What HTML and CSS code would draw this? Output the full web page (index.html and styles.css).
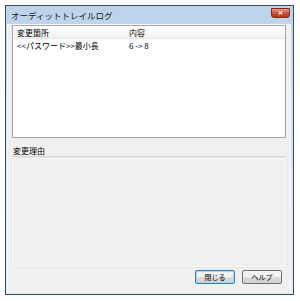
FILE: index.html
```html
<!DOCTYPE html>
<html lang="ja">
<head>
  <meta charset="UTF-8">
  <title>オーディットトレイルログ</title>
  <link rel="stylesheet" href="styles.css">
</head>
<body>
  <div class="window">
    <div class="titlebar">
      <span class="title">オーディットトレイルログ</span>
      <span class="close">&#x2715;</span>
    </div>
    <div class="client">
      <div class="list">
        <div class="list-head">
          <span class="col-a">変更箇所</span>
          <span class="col-b">内容</span>
        </div>
        <div class="list-row">
          <span class="col-a">&lt;&lt;パスワード&gt;&gt;最小長</span>
          <span class="col-b">6 -&gt; 8</span>
        </div>
      </div>
      <div class="reason-label">変更理由</div>
      <div class="reason-box"></div>
      <div class="buttons">
        <button class="btn btn-default">閉じる</button>
        <button class="btn">ヘルプ</button>
      </div>
    </div>
  </div>
</body>
</html>
```

FILE: styles.css
```css
* {
  margin: 0;
  padding: 0;
  box-sizing: border-box;
}

body {
  background: #fff;
  font-family: "Noto Sans CJK JP", "Liberation Sans", sans-serif;
  font-size: 8px;
  color: #000;
}

.window {
  margin: 5px 0 0 5px;
  width: 289px;
  height: 290px;
  border: 1px solid #3d4d5c;
  border-bottom-color: #1d5a5a;
  background: linear-gradient(#bcd3ea, #d9e6f3 60%, #e4edf6);
  display: flex;
  flex-direction: column;
  padding: 0 2px 2px 1px;
}

.titlebar {
  height: 18px;
  display: flex;
  align-items: center;
  justify-content: space-between;
  padding: 0 1px 0 4px;
}

.title {
  font-size: 8.5px;
  color: #1a1a1a;
}

.close {
  width: 19px;
  height: 10px;
  margin-top: -5px;
  border-radius: 0 0 3px 3px;
  border: 1px solid #7a2a1e;
  background: linear-gradient(#eba08c, #d0553c 50%, #b8321e);
  color: #fff;
  font-size: 6px;
  font-weight: bold;
  line-height: 8px;
  text-align: center;
}

.client {
  flex: 1;
  background: #f0f0f0;
  border: 1px solid #f6f8fa;
  display: flex;
  flex-direction: column;
  padding: 0 4px 7px 4px;
}

.list {
  height: 113px;
  background: #fff;
  border: 1px solid #a5a5a5;
}

.list-head {
  height: 13px;
  display: flex;
  align-items: center;
  background: linear-gradient(#fff, #f1f2f4);
  border-bottom: 1px solid #e5e5e5;
}

.list-row {
  height: 12px;
  display: flex;
  align-items: center;
}

.col-a {
  width: 116px;
  padding-left: 4px;
}

.col-b {
  flex: 1;
}

.reason-label {
  margin-top: 6px;
  height: 13px;
  line-height: 13px;
  padding-left: 1px;
  border-bottom: 1px solid #d8d8d8;
}

.reason-box {
  height: 109px;
  margin-top: 1px;
  background: #f0f0f0;
  border: 1px solid #fafafa;
  border-radius: 2px;
  box-shadow: 0 0 0 1px #e6e6e6;
}

.buttons {
  margin-top: auto;
  display: flex;
  justify-content: flex-end;
  gap: 7px;
  padding-right: 4px;
}

.btn {
  width: 40px;
  height: 14px;
  font-family: inherit;
  font-size: 7px;
  color: #000;
  background: linear-gradient(#f2f2f2 50%, #dddddd 50%, #cfcfcf);
  border: 1px solid #707070;
  border-radius: 2px;
}

.btn-default {
  border-color: #3c7fb1;
  box-shadow: inset 0 0 0 1px #a6d7f2;
}
```
